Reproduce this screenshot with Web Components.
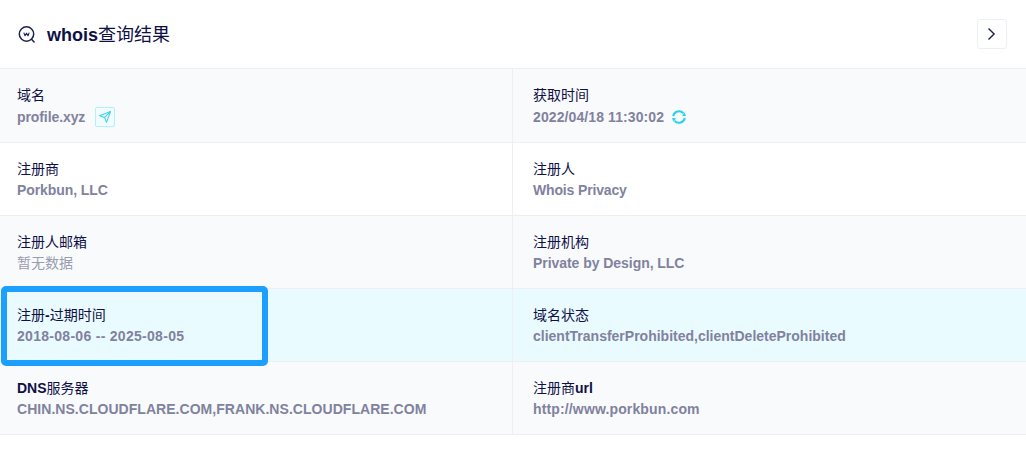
<!DOCTYPE html>
<html lang="zh">
<head>
<meta charset="utf-8">
<title>whois</title>
<style>
html, body { margin: 0; background: #fff; }
body { font-family: "Liberation Sans", "Noto Sans CJK SC", sans-serif; height: 465px; overflow: hidden; }
</style>
</head>
<body>
<whois-card>
    <whois-row>
        <whois-cell label="域名" value="profile.xyz" style="--track:-.09px"><icon-send></icon-send></whois-cell>
        <whois-cell label="获取时间" value="2022/04/18 11:30:02" style="--track:.1px"><icon-refresh></icon-refresh></whois-cell>
    </whois-row>
    <whois-row>
        <whois-cell label="注册商" value="Porkbun, LLC" style="--track:-.08px"></whois-cell>
        <whois-cell label="注册人" value="Whois Privacy" style="--track:-.15px"></whois-cell>
    </whois-row>
    <whois-row>
        <whois-cell label="注册人邮箱" value="暂无数据" light></whois-cell>
        <whois-cell label="注册机构" value="Private by Design, LLC" style="--track:-.05px"></whois-cell>
    </whois-row>
    <whois-row active>
        <whois-cell label="注册-过期时间" value="2018-08-06 -- 2025-08-05" style="--track:.29px"></whois-cell>
        <whois-cell label="域名状态" value="clientTransferProhibited,clientDeleteProhibited"></whois-cell>
    </whois-row>
    <whois-row>
        <whois-cell label="DNS服务器" value="CHIN.NS.CLOUDFLARE.COM,FRANK.NS.CLOUDFLARE.COM" style="--track:.04px"></whois-cell>
        <whois-cell label="注册商url" value="http://www.porkbun.com" style="--track:.14px"></whois-cell>
    </whois-row>
</whois-card>
<script>
const cardTemplate = document.createElement("template");
cardTemplate.innerHTML = `
<style>
:host { display: block; width: 1026px; color: #0f1146; }
header {
    height: 68px;
    box-sizing: border-box;
    display: flex;
    align-items: center;
    padding: 0 19px 0 17px;
}
svg { display: block; }
h2 {
    margin: 2px 0 0 11px;
    font-size: 18px;
    line-height: 24px;
    font-weight: 700;
    flex: 1;
}
h2 span { font-weight: 400; }
button {
    width: 30px;
    height: 30px;
    padding: 0;
    display: flex;
    align-items: center;
    justify-content: center;
    background: #fff;
    border: 1px solid #eeeff5;
    border-radius: 3px;
}
.rows { border-top: 1px solid #eeeff5; }
</style>
<header>
    <svg width="19" height="19" viewBox="0 0 19 19" fill="none" stroke="#1d2355" stroke-width="1.5">
        <circle cx="9.5" cy="9" r="7.2"/>
        <path d="M14.5 14.2l2.6 2.8" stroke-linecap="round"/>
        <path d="M6.8 7.6l1.2 3.2 1.5-2.6 1.5 2.6 1.2-3.2" stroke-width="1.1" stroke-linejoin="round"/>
    </svg>
    <h2>whois<span>查询结果</span></h2>
    <button aria-label="展开">
        <svg width="10" height="14" viewBox="0 0 10 14" fill="none" stroke="#1a2050" stroke-width="1.4">
            <path d="M1.5 1.5L7.1 7 1.5 12.5"/>
        </svg>
    </button>
</header>
<div class="rows"><slot></slot></div>
`;

class WhoisCard extends HTMLElement {
    constructor() {
        super();
        this.attachShadow({ mode: "open" });
    }
    connectedCallback() {
        this.shadowRoot.appendChild(cardTemplate.content.cloneNode(true));
    }
}

const rowTemplate = document.createElement("template");
rowTemplate.innerHTML = `
<style>
:host {
    display: grid;
    grid-template-columns: 513px 513px;
    position: relative;
    height: 73px;
    box-sizing: border-box;
    background: #f9fafc;
    border-bottom: 1px solid #eeeff5;
}
:host(:nth-of-type(even)) { background: #fff; }
:host([active]:nth-of-type(n)) { background: #e9fbfe; z-index: 1; }
:host(:first-child) { height: 74px; --value-gap: 2px; }
.mark {
    display: none;
    position: absolute;
    left: 1px;
    top: -3px;
    width: 267px;
    height: 80px;
    box-sizing: border-box;
    border: 6px solid #1c9fff;
    border-radius: 5px;
    pointer-events: none;
}
:host([active]) .mark { display: block; }
</style>
<slot></slot>
<div class="mark"></div>
`;

class WhoisRow extends HTMLElement {
    constructor() {
        super();
        this.attachShadow({ mode: "open" });
    }
    connectedCallback() {
        this.shadowRoot.appendChild(rowTemplate.content.cloneNode(true));
    }
}

const cellTemplate = document.createElement("template");
cellTemplate.innerHTML = `
<style>
:host {
    display: flex;
    flex-direction: column;
    padding: 16px 0 0 17px;
    border-right: 1px solid #eeeff5;
    box-sizing: border-box;
}
:host(:last-of-type) { border-right: 0; padding-left: 20px; }
.label { font-size: 14px; line-height: 20px; font-weight: 700; color: #0f1146; }
.label span { font-weight: 400; }
.value {
    display: flex;
    align-items: center;
    margin-top: var(--value-gap, 1px);
    font-size: 14px;
    line-height: 20px;
    font-weight: 700;
    color: #80829e;
    letter-spacing: var(--track, 0);
}
:host([light]) .value { font-weight: 400; color: #9a9cb0; }
</style>
<div class="label"></div>
<div class="value"><span class="text"></span><slot></slot></div>
`;

class WhoisCell extends HTMLElement {
    constructor() {
        super();
        this.attachShadow({ mode: "open" });
    }
    connectedCallback() {
        this.shadowRoot.appendChild(cellTemplate.content.cloneNode(true));
        // latin in the label stays bold, the chinese part is regular
        const label = this.shadowRoot.querySelector(".label");
        this.getAttribute("label").split(/([\u4e00-\u9fff]+)/).forEach(part => {
            if (!part) return;
            if (/[\u4e00-\u9fff]/.test(part)) {
                const span = document.createElement("span");
                span.textContent = part;
                label.appendChild(span);
            } else {
                label.appendChild(document.createTextNode(part));
            }
        });
        this.shadowRoot.querySelector(".text").textContent = this.getAttribute("value");
    }
}

class IconSend extends HTMLElement {
    constructor() {
        super();
        this.attachShadow({ mode: "open" });
        this.shadowRoot.innerHTML = `
<style>
:host {
    display: flex;
    align-items: center;
    justify-content: center;
    width: 20px;
    height: 20px;
    margin-left: 10px;
    box-sizing: border-box;
    background: #f0fcfe;
    border: 1px solid #b4f0f7;
    border-radius: 2px;
}
svg { display: block; }
</style>
<svg width="14" height="14" viewBox="0 0 14 14" fill="none" stroke="#45d3e8" stroke-width="1.1" stroke-linejoin="round">
    <path d="M12.5 1.5L1.5 5.8l5 1.6 2 5z"/>
    <path d="M12.5 1.5L6.5 7.4"/>
</svg>`;
    }
}

class IconRefresh extends HTMLElement {
    constructor() {
        super();
        this.attachShadow({ mode: "open" });
        this.shadowRoot.innerHTML = `
<style>
:host { display: block; width: 16px; height: 16px; margin-left: 7px; }
svg { display: block; }
</style>
<svg width="16" height="16" viewBox="0 0 16 16" fill="none" stroke="#22d3ee" stroke-width="2">
    <path d="M2.2 7.2A5.9 5.9 0 0 1 12.4 4.2"/>
    <path d="M13.8 8.8A5.9 5.9 0 0 1 3.6 11.8"/>
    <path d="M15.2 6.8l-4.2.1 2.2-3.6z" fill="#22d3ee" stroke="none"/>
    <path d="M.8 9.2l4.2-.1-2.2 3.6z" fill="#22d3ee" stroke="none"/>
</svg>`;
    }
}

customElements.define("whois-card", WhoisCard);
customElements.define("whois-row", WhoisRow);
customElements.define("whois-cell", WhoisCell);
customElements.define("icon-send", IconSend);
customElements.define("icon-refresh", IconRefresh);
</script>
</body>
</html>
